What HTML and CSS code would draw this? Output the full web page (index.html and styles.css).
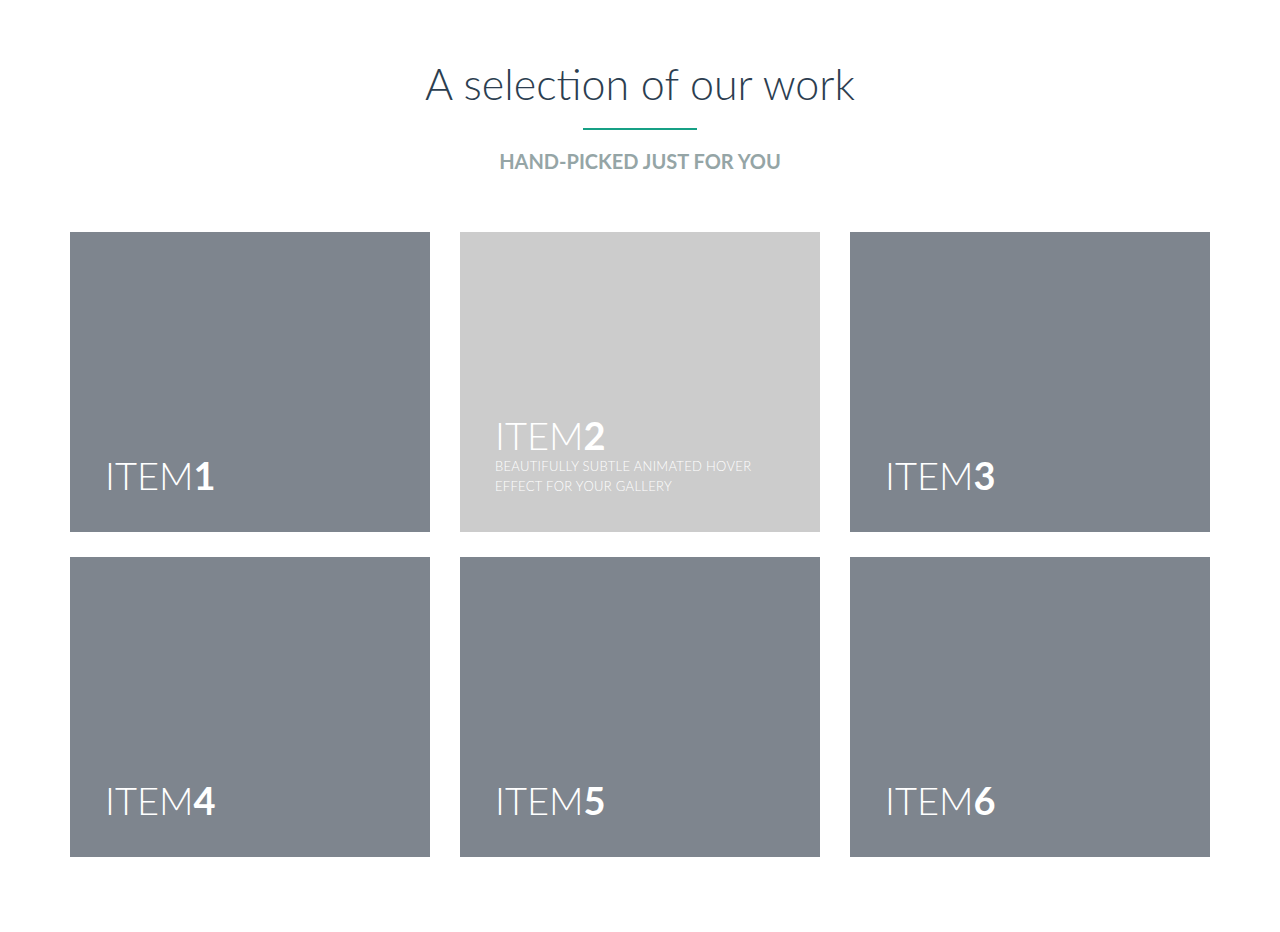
FILE: index.html
```html
<!DOCTYPE html>
<html lang="en">
<head>
<meta charset="utf-8">
<title>A selection of our work</title>
<link rel="stylesheet" href="styles.css">
</head>
<body>
<section class="work">
  <header class="work-header">
    <h1 class="work-title">A selection of our work</h1>
    <div class="work-rule"></div>
    <p class="work-sub">HAND-PICKED JUST FOR YOU</p>
  </header>
  <div class="grid">
    <figure class="tile"><figcaption class="cap"><h2 class="cap-title">Item<b>1</b></h2></figcaption></figure>
    <figure class="tile tile-hover"><figcaption class="cap cap-hover"><h2 class="cap-title">Item<b>2</b></h2><p class="cap-text">Beautifully subtle animated hover effect for your gallery</p></figcaption></figure>
    <figure class="tile"><figcaption class="cap"><h2 class="cap-title">Item<b>3</b></h2></figcaption></figure>
    <figure class="tile"><figcaption class="cap"><h2 class="cap-title">Item<b>4</b></h2></figcaption></figure>
    <figure class="tile"><figcaption class="cap"><h2 class="cap-title">Item<b>5</b></h2></figcaption></figure>
    <figure class="tile"><figcaption class="cap"><h2 class="cap-title">Item<b>6</b></h2></figcaption></figure>
  </div>
</section>
</body>
</html>
```
FILE: styles.css
```css
* { box-sizing: border-box; }
html, body { margin: 0; padding: 0; background: #fff; }
body { font-family: Lato, "Open Sans", sans-serif; }

.work { padding-top: 57px; }
.work-header { display: flex; flex-direction: column; align-items: center; }
.work-title {
  margin: 0;
  font-size: 43px;
  font-weight: 300;
  line-height: 54px;
  color: #2c3e50;
}
.work-rule { width: 114px; height: 2px; background: #16a085; margin-top: 17px; }
.work-sub {
  margin: 19px 0 0;
  font-size: 20px;
  font-weight: 700;
  line-height: 24px;
  color: #95a5a6;
}

.grid {
  display: grid;
  grid-template-columns: repeat(3, 360px);
  column-gap: 30px;
  row-gap: 25px;
  justify-content: center;
  margin-top: 59px;
}
.tile {
  margin: 0;
  height: 300px;
  background: #7e858e;
  display: flex;
  align-items: flex-end;
}
.tile-hover { background: #cccccc; }
.cap {
  padding: 0 35px 34px;
  color: #fff;
  text-transform: uppercase;
}
.cap-hover { padding-bottom: 36px; }
.cap-title {
  margin: 0;
  font-size: 38px;
  font-weight: 300;
  line-height: 46px;
}
.cap-hover .cap-title { margin-bottom: -2px; }
.cap-title b { font-weight: 700; }
.cap-text {
  margin: 0;
  width: 280px;
  font-size: 13px;
  font-weight: 300;
  letter-spacing: 0.3px;
  line-height: 20px;
}
```
